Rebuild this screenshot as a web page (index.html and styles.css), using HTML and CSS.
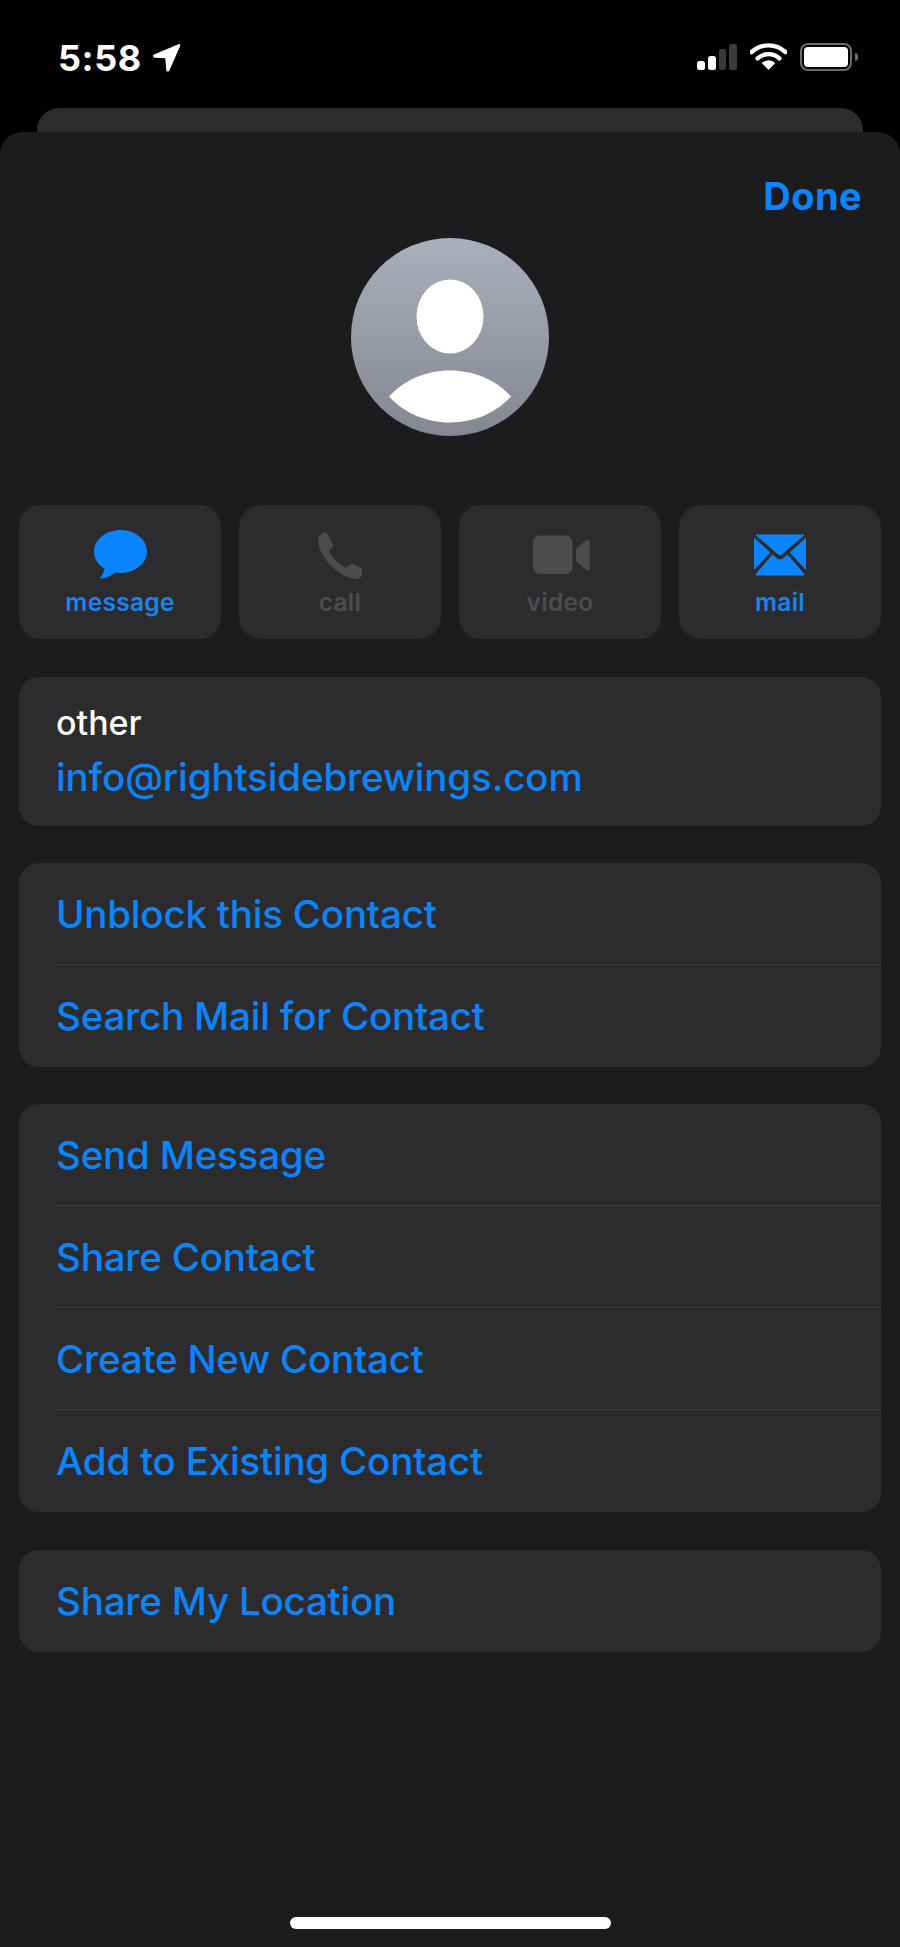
FILE: index.html
```html
<!DOCTYPE html>
<html lang="en">
<head>
<meta charset="utf-8">
<title>Contact</title>
<link rel="stylesheet" href="styles.css">
</head>
<body>
<div class="phone">
  <header class="status">
    <div class="status-left">
      <span class="time">5:58</span>
      <svg class="arrow" viewBox="0 0 29 29"><path d="M26.500 1.200 2 11.600c-1.600.8-1.200 3 .6 3.100l10.700.6 1 11.600c.1 1.800 2.400 2.200 3.100.6L28 3.200c.6-1.300-.2-2.500-1.500-2z" fill="#fff"/></svg>
    </div>
    <div class="status-right">
      <div class="signal"><i class="b1"></i><i class="b2"></i><i class="b3"></i><i class="b4"></i></div>
      <svg class="wifi" viewBox="0 0 37 27"><path d="M1.500 9.200A24.500 24.500 0 0 1 35.500 9.200M7.600 15.400A16 16 0 0 1 29.400 15.400" fill="none" stroke="#fff" stroke-width="4.400" stroke-linecap="round"/><path d="M18.500 27 11.700 20a9.600 9.600 0 0 1 13.600 0z" fill="#fff"/></svg>
      <div class="battery"><div class="battery-body"><div class="battery-level"></div></div><div class="battery-nub"></div></div>
    </div>
  </header>
  <div class="back-card"></div>
  <main class="sheet">
    <div class="done-row"><span class="done">Done</span></div>
    <svg class="avatar" viewBox="0 0 198 198">
      <defs><linearGradient id="av" x1="0" y1="0" x2="0" y2="1"><stop offset="0" stop-color="#a9afbb"/><stop offset="1" stop-color="#858790"/></linearGradient></defs>
      <circle cx="99" cy="99" r="99" fill="url(#av)"/>
      <ellipse cx="99" cy="78.500" rx="33.500" ry="37" fill="#fff"/>
      <path d="M38 158.500C53 142 75 132.500 99 132.500S145 142 160 158.500C145 175 123 184.500 99 184.500S53 175 38 158.500Z" fill="#fff"/>
    </svg>
    <nav class="actions">
      <div class="action on">
        <svg class="ic" width="53" height="50" viewBox="0 0 53 50"><path d="M26.500 0C41.200 0 53 9.600 53 21.500S41.200 43 26.500 43c-1.800 0-3.500-.1-5.200-.4-3.300 3-8.800 5.600-13.800 6-1.100.1-1.500-.8-.9-1.500 1.500-1.800 3.500-5 3.900-8.500C3.800 34.900 0 28.600 0 21.500 0 9.600 11.800 0 26.500 0z" fill="#0a84ff"/></svg>
        <span class="label">message</span>
      </div>
      <div class="action">
        <svg class="ic" width="44" height="45" viewBox="0 0 44 45"><path d="M1.500 3.200C3.300 1 6.400-.5 8 .3c1.300.7 2 1.600 3.200 4l3.200 6.400c1 2.100.8 3.600-.6 5l-1.700 1.800c-.9 1-.9 2-.2 3.200 1.800 3 4.200 6 6.600 8.300 2.400 2.300 5.200 4.300 8 5.800 1.200.6 2.100.5 3-.4l1.900-1.900c1.300-1.400 2.900-1.600 5-.6l5.500 2.800c2.500 1.300 3.400 2.300 3.900 3.700.5 1.700-1.200 4.700-3.400 6.400-2 1.500-4.500 1.700-7.100 1.300-7.300-1.200-14.600-5.500-21-11.800C8 28 3 20.600 1 13.500.1 9.800-.4 5.500 1.500 3.200z" fill="#4c4c4f"/></svg>
        <span class="label">call</span>
      </div>
      <div class="action">
        <svg class="ic ic-video" width="57" height="39" viewBox="0 0 57 39"><rect x="0" y="0" width="39.500" height="38.500" rx="7" fill="#4c4c4f"/><path d="M43 14.500c0-1 .4-1.700 1.200-2.300l9-7.400c1.400-1.100 3.300-.4 3.300 1.500v26.400c0 1.900-1.900 2.600-3.300 1.500l-9-7.400c-.8-.6-1.200-1.300-1.200-2.300z" fill="#4c4c4f"/></svg>
        <span class="label">video</span>
      </div>
      <div class="action on">
        <svg class="ic" width="52" height="41" viewBox="0 0 52 41"><path d="M3.500 0h45c.8 0 1.500.1 2 .4L28.800 19.300c-1.100 1-1.900 1.400-2.800 1.400s-1.700-.4-2.800-1.400L1.500.4C2 .1 2.700 0 3.500 0zM0 3.300 16.300 18 0 35.600V3.300zM52 3.300v32.300L35.700 18 52 3.300zM18.500 20l3 2.700c1.700 1.500 3 2 4.500 2s2.800-.5 4.500-2l3-2.700L50.500 39.800c-.6.800-1.200 1.200-2.200 1.200H3.700c-1 0-1.600-.4-2.200-1.200L18.500 20z" fill="#0a84ff"/></svg>
        <span class="label">mail</span>
      </div>
    </nav>
    <section class="card info">
      <div class="info-label">other</div>
      <div class="info-value">info@rightsidebrewings.com</div>
    </section>
    <section class="card">
      <div class="row">Unblock this Contact</div>
      <div class="row">Search Mail for Contact</div>
    </section>
    <section class="card">
      <div class="row">Send Message</div>
      <div class="row">Share Contact</div>
      <div class="row">Create New Contact</div>
      <div class="row">Add to Existing Contact</div>
    </section>
    <section class="card last">
      <div class="row">Share My Location</div>
    </section>
    <div class="home-bar"></div>
  </main>
</div>
</body>
</html>
```
FILE: styles.css
```css
* { box-sizing: border-box; }
html, body { margin: 0; padding: 0; background: #000; }
body { font-family: Inter, "Liberation Sans", sans-serif; }
.phone { width: 900px; height: 1947px; display: flex; flex-direction: column; overflow: hidden; }

.status { height: 108px; flex: none; display: flex; justify-content: space-between; padding: 43px 42px 0 58px; }
.status-left { display: flex; align-items: flex-start; gap: 10px; height: 30px; }
.time { color: #fff; font-size: 36px; line-height: 30px; font-weight: 700; letter-spacing: 0.6px; }
.arrow { width: 29px; height: 29px; display: block; }
.status-right { display: flex; align-items: flex-start; height: 28px; }
.signal { width: 40px; height: 27px; display: flex; align-items: flex-end; gap: 3px; }
.signal i { display: block; width: 8px; border-radius: 2.500px; background: #fff; }
.signal .b1 { height: 9px; }
.signal .b2 { height: 14px; }
.signal .b3 { height: 21px; background: #3a3a3c; }
.signal .b4 { height: 26px; background: #3a3a3c; }
.wifi { width: 37px; height: 27px; margin-left: 13px; display: block; }
.battery { margin-left: 13px; display: flex; align-items: center; gap: 3px; }
.battery-body { width: 52px; height: 28px; border: 2.500px solid #6a6a6c; border-radius: 8px; padding: 2px; }
.battery-level { height: 100%; background: #fff; border-radius: 4px; }
.battery-nub { width: 3px; height: 8px; background: #6a6a6c; border-radius: 0 3px 3px 0; }

.back-card { height: 24px; flex: none; margin: 0 37px; background: #2c2c2e; border-radius: 22px 22px 0 0; }

.sheet { flex: 1; background: #1c1c1e; border-radius: 22px 22px 0 0; padding: 0 19px; display: flex; flex-direction: column; }
.done-row { display: flex; justify-content: flex-end; height: 106px; padding: 44px 19px 0 0; }
.done { color: #0a84ff; font-size: 38px; line-height: 40px; font-weight: 700; letter-spacing: 0.4px; }
.avatar { width: 198px; height: 198px; display: block; align-self: center; flex: none; }

.actions { display: grid; grid-template-columns: repeat(4, 1fr); gap: 18px; margin-top: 69px; }
.action { height: 134px; background: #2c2c2e; border-radius: 22px; display: flex; flex-direction: column; align-items: center; color: #4c4c4f; padding-top: 25px; }
.action.on { color: #1a84ee; }
.ic { display: block; height: 50px; flex: none; }
.ic-video { margin-left: 3px; }
.label { font-size: 24.500px; line-height: 30px; font-weight: 600; letter-spacing: 0.3px; margin-top: 7px; }

.card { background: #2c2c2e; border-radius: 20px; margin-top: 37px; overflow: hidden; }
.info { height: 149px; padding: 26px 37px 0; margin-top: 38px; }
.last { margin-top: 38px; }
.info-label { color: #fff; font-size: 34px; line-height: 40px; font-weight: 500; }
.info-value { color: #0a84ff; font-size: 38.500px; line-height: 46px; margin-top: 11px; font-weight: 500; letter-spacing: -0.13px; }
.row { height: 102px; margin-left: 37px; display: flex; align-items: center; color: #0a84ff; font-size: 38.500px; font-weight: 500; letter-spacing: -0.2px; border-bottom: 1px solid #3e3e41; }
.row:last-child { border-bottom: 0; }

.home-bar { width: 321px; height: 12px; border-radius: 6px; background: #fff; align-self: center; margin-top: auto; margin-bottom: 18px; }
```
